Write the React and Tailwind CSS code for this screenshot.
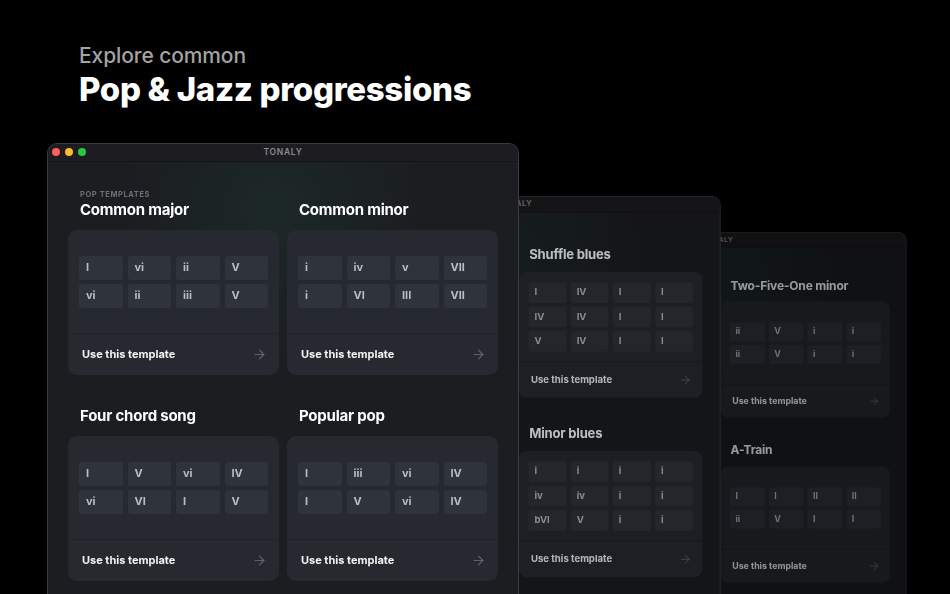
import React from "react";
import { ArrowRight } from "lucide-react";

const popWindow = {
  label: "POP TEMPLATES",
  rows: [
    [
      { title: "Common major", chords: [["I", "vi", "ii", "V"], ["vi", "ii", "iii", "V"]] },
      { title: "Common minor", chords: [["i", "iv", "v", "VII"], ["i", "VI", "III", "VII"]] },
    ],
    [
      { title: "Four chord song", chords: [["I", "V", "vi", "IV"], ["vi", "VI", "I", "V"]] },
      { title: "Popular pop", chords: [["I", "iii", "vi", "IV"], ["I", "V", "vi", "IV"]] },
    ],
  ],
};

// the left column of the back windows sits behind the front window
const bluesWindow = {
  label: "BLUES TEMPLATES",
  covered: true,
  rows: [
    [
      { title: "12-bar blues", chords: [["I", "I", "I", "I"], ["IV", "IV", "I", "I"], ["V", "IV", "I", "V"]] },
      { title: "Shuffle blues", chords: [["I", "IV", "I", "I"], ["IV", "IV", "I", "I"], ["V", "IV", "I", "I"]] },
    ],
    [
      { title: "Quick change", chords: [["I", "IV", "I", "I"], ["IV", "IV", "I", "I"], ["V", "IV", "I", "V"]] },
      { title: "Minor blues", chords: [["i", "i", "i", "i"], ["iv", "iv", "i", "i"], ["bVI", "V", "i", "i"]] },
    ],
  ],
};

const jazzWindow = {
  label: "JAZZ TEMPLATES",
  covered: true,
  rows: [
    [
      { title: "Two-Five-One", chords: [["ii", "V", "I", "I"], ["ii", "V", "I", "I"]] },
      { title: "Two-Five-One minor", chords: [["ii", "V", "i", "i"], ["ii", "V", "i", "i"]] },
    ],
    [
      { title: "Rhythm changes", chords: [["I", "vi", "ii", "V"], ["I", "vi", "ii", "V"]] },
      { title: "A-Train", chords: [["I", "I", "II", "II"], ["ii", "V", "I", "I"]] },
    ],
  ],
};

const TemplateCard = ({ chords }) => (
  <div className="rounded-[9px] bg-[#262a30] h-[145px] flex flex-col overflow-hidden">
    <div className="h-[103px] flex items-center px-[11px]">
      <div className="grid grid-cols-4 gap-x-[5px] gap-y-1 w-full">
        {chords.flat().map((c, i) => (
          <div
            key={i}
            className="h-6 rounded-[3px] bg-[#2f333a] flex items-center pl-[7px] text-[11px] font-bold text-[#b9bdc4] leading-none"
          >
            {c}
          </div>
        ))}
      </div>
    </div>
    <div className="flex-1 border-t border-[#1f2227] flex items-center justify-between pl-[14px] pr-[12px]">
      <span className="text-[11px] font-bold text-[#f2f2f2]">Use this template</span>
      <ArrowRight size={15} strokeWidth={1.8} className="text-[#5e636b]" />
    </div>
  </div>
);

const TonalyWindow = ({ data, className }) => (
  <div
    className={`absolute w-[472px] h-[470px] rounded-t-[10px] border border-[#3a3c41] bg-[#1b1d21] overflow-hidden ${className}`}
  >
    <div className="relative h-[18px] bg-[#1d1c20] border-b border-[#141417] flex items-center justify-center">
      <div className="absolute left-[4px] top-[4px] flex gap-[5px]">
        <span className="w-2 h-2 rounded-full bg-[#ff5f57]" />
        <span className="w-2 h-2 rounded-full bg-[#febc2e]" />
        <span className="w-2 h-2 rounded-full bg-[#28c840]" />
      </div>
      <span className="text-[8.5px] font-semibold tracking-[0.08em] text-[#8a8a8f]">TONALY</span>
    </div>
    <div className="h-full px-5 pt-[28px] bg-[radial-gradient(circle_at_48%_10%,rgba(40,190,110,0.07),transparent_32%)]">
      {data.rows.map((row, ri) => (
        <div key={ri} className={`grid grid-cols-2 gap-2 ${ri > 0 ? "mt-[31px]" : ""}`}>
          {row.map((t, ci) => (
            <div key={ci} className={data.covered && ci === 0 ? "invisible" : ""}>
              {ri === 0 && (
                <div
                  className={`h-[10px] pl-3 text-[7.5px] font-bold tracking-[0.08em] text-[#6b6f77] leading-[10px] ${ci > 0 ? "invisible" : ""}`}
                >
                  {data.label}
                </div>
              )}
              <div className="h-5 pl-3 mb-[10px] text-[15px] font-bold leading-5 text-white tracking-[-0.015em]">
                {t.title}
              </div>
              <TemplateCard chords={t.chords} />
            </div>
          ))}
        </div>
      ))}
    </div>
  </div>
);

export default function App() {
  return (
    <div
      className="relative w-[950px] h-[594px] overflow-hidden bg-black"
      style={{ fontFamily: "Inter, 'Noto Sans', sans-serif" }}
    >
      <div className="pl-[79px] pt-[44px]">
        <div className="text-[21px] leading-6 font-medium text-[#a3a3a3] tracking-[-0.005em]">Explore common</div>
        <div className="mt-[3px] text-[33px] leading-9 font-extrabold text-white tracking-[-0.01em]">
          Pop &amp; Jazz progressions
        </div>
      </div>

      <TonalyWindow data={jazzWindow} className="left-[529px] top-[232px] origin-top-left scale-[0.8] brightness-[0.6]" />
      <TonalyWindow data={bluesWindow} className="left-[310px] top-[196px] origin-top-left scale-[0.87] brightness-[0.74]" />
      <TonalyWindow data={popWindow} className="left-[47px] top-[143px]" />
    </div>
  );
}
